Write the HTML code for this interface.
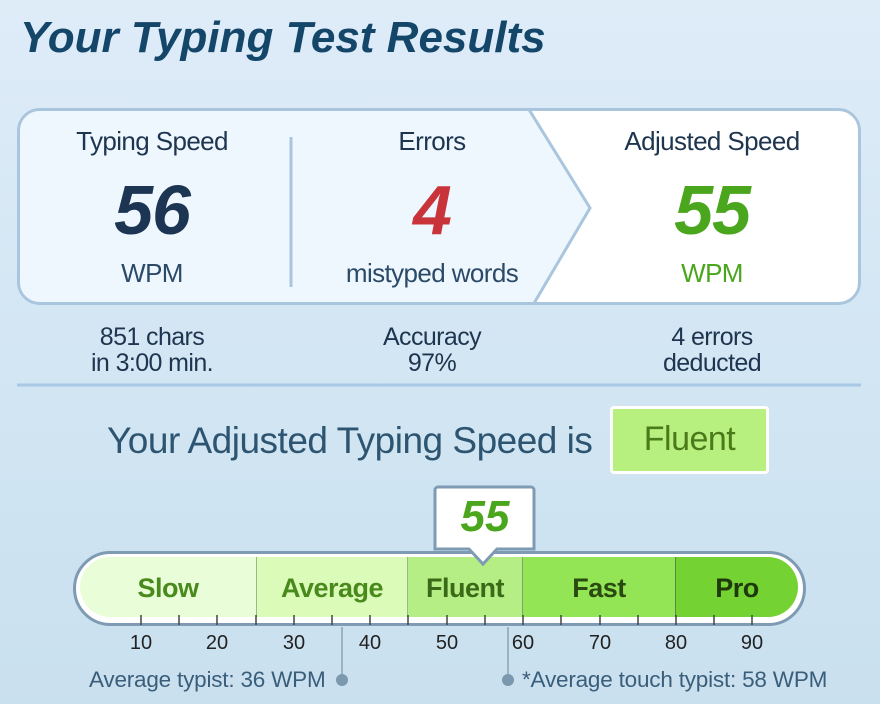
<!DOCTYPE html>
<html><head><style>
*{margin:0;padding:0;box-sizing:border-box}
body{width:880px;height:704px;overflow:hidden;background:linear-gradient(180deg,#deecf8 0%,#d3e6f3 50%,#c9e0ef 100%);font-family:"Liberation Sans",sans-serif;position:relative}
.a{position:absolute}
.c{text-align:center}
h1{position:absolute;left:20px;top:13px;font-size:44px;font-weight:bold;font-style:italic;color:#14466a;letter-spacing:0px}
.lab{font-size:26px;color:#1e3550;width:280px;letter-spacing:-0.6px}
.big{font-size:70px;font-weight:bold;font-style:italic;width:280px;letter-spacing:-1px}
.t{font-size:25px;color:#1e3550;width:280px;line-height:26px;letter-spacing:-0.6px}
.seg{position:absolute;top:0;height:100%;font-size:27px;font-weight:bold;display:flex;align-items:center;justify-content:center;padding-top:2px;letter-spacing:-0.5px}
.n{position:absolute;top:632px;font-size:20px;color:#222;width:40px;margin-left:-20px;text-align:center}
</style></head><body>
<h1>Your Typing Test Results</h1>
<svg class="a" style="left:0;top:0" width="880" height="704">
<defs><clipPath id="cp"><rect x="17" y="108" width="844" height="197" rx="22"/></clipPath></defs>
<g clip-path="url(#cp)">
<rect x="17" y="108" width="844" height="197" fill="#fff"/>
<path d="M17 108 L528 108 L590 208 L533 305 L17 305Z" fill="#eff7fe"/>
<path d="M528 108 L590 208 L533 305" fill="none" stroke="#a9c6de" stroke-width="3"/>
</g>
<rect x="18.5" y="109.5" width="841" height="194" rx="21" fill="none" stroke="#a9c6de" stroke-width="3"/>
<line x1="291" y1="137" x2="291" y2="287" stroke="#a9c6de" stroke-width="3"/>
<line x1="17" y1="385" x2="861" y2="385" stroke="#a8c8e6" stroke-width="3"/>
</svg>
<div class="a c lab" style="left:12px;top:126px">Typing Speed</div>
<div class="a c lab" style="left:292px;top:126px">Errors</div>
<div class="a c lab" style="left:572px;top:126px">Adjusted Speed</div>
<div class="a c big" style="left:12px;top:170px;color:#1c3553">56</div>
<div class="a c big" style="left:292px;top:170px;color:#c9343a">4</div>
<div class="a c big" style="left:572px;top:170px;color:#4aa61c">55</div>
<div class="a c lab" style="left:12px;top:258px;color:#2a4a68">WPM</div>
<div class="a c lab" style="left:292px;top:258px;color:#2a4a68">mistyped words</div>
<div class="a c lab" style="left:572px;top:258px;color:#4aa61c">WPM</div>
<div class="a c t" style="left:12px;top:324px">851 chars<br>in 3:00 min.</div>
<div class="a c t" style="left:292px;top:324px">Accuracy<br>97%</div>
<div class="a c t" style="left:572px;top:324px">4 errors<br>deducted</div>
<div class="a" style="left:107px;top:420px;font-size:37px;color:#2d5470;letter-spacing:-0.5px">Your Adjusted Typing Speed is</div>
<div class="a c" style="left:610px;top:406px;width:159px;height:68px;background:#b8f080;border:3px solid #fff;border-radius:4px;font-size:34px;color:#4a7a1a;line-height:60px;letter-spacing:-0.5px">Fluent</div>
<div class="a" style="left:73px;top:551px;width:733px;height:75px;border-radius:38px;background:#fff;border:3px solid #7f9bb3"></div>
<div class="a" style="left:80px;top:557px;width:718px;height:60px;border-radius:30px;overflow:hidden">
<div class="seg" style="left:0;width:176px;background:#eafdd9;color:#4a8a1c">Slow</div>
<div class="seg" style="left:176px;width:151px;background:#dafcb8;color:#4a8a1c;border-left:1px solid #9ab888">Average</div>
<div class="seg" style="left:327px;width:115px;background:#b5ee84;color:#3a6a18;border-left:1px solid #9ab888">Fluent</div>
<div class="seg" style="left:442px;width:153px;background:#94e556;color:#2a4a12;border-left:1px solid #7aa860">Fast</div>
<div class="seg" style="left:595px;width:123px;background:#74d232;color:#1e3a0c;border-left:1px solid #5a8a40">Pro</div>
</div>
<svg class="a" style="left:0;top:0" width="880" height="704">
<g stroke="#444" stroke-width="1.5">
<line x1="141" y1="615" x2="141" y2="625"/><line x1="179" y1="615" x2="179" y2="625"/><line x1="217" y1="615" x2="217" y2="625"/><line x1="256" y1="615" x2="256" y2="625"/><line x1="294" y1="615" x2="294" y2="625"/><line x1="332" y1="615" x2="332" y2="625"/><line x1="370" y1="615" x2="370" y2="625"/><line x1="408" y1="615" x2="408" y2="625"/><line x1="447" y1="615" x2="447" y2="625"/><line x1="485" y1="615" x2="485" y2="625"/><line x1="523" y1="615" x2="523" y2="625"/><line x1="561" y1="615" x2="561" y2="625"/><line x1="600" y1="615" x2="600" y2="625"/><line x1="638" y1="615" x2="638" y2="625"/><line x1="676" y1="615" x2="676" y2="625"/><line x1="714" y1="615" x2="714" y2="625"/><line x1="752" y1="615" x2="752" y2="625"/>
</g>
<line x1="342" y1="627" x2="342" y2="680" stroke="#8aa2b6" stroke-width="1.5"/>
<circle cx="342" cy="680" r="6" fill="#7c98ae"/>
<line x1="508" y1="627" x2="508" y2="680" stroke="#8aa2b6" stroke-width="1.5"/>
<circle cx="508" cy="680" r="6" fill="#7c98ae"/>
<path d="M438 487 H531 a3 3 0 0 1 3 3 V549 H497 L483 564 L469 549 H435 V490 a3 3 0 0 1 3 -3Z" fill="#fff" stroke="#7f9bb3" stroke-width="3"/>
</svg>
<div class="a c" style="left:436px;top:492px;width:98px;font-size:44px;font-weight:bold;font-style:italic;color:#4aa61c">55</div>
<div class="n" style="left:141px">10</div><div class="n" style="left:217px">20</div><div class="n" style="left:294px">30</div><div class="n" style="left:370px">40</div><div class="n" style="left:447px">50</div><div class="n" style="left:523px">60</div><div class="n" style="left:600px">70</div><div class="n" style="left:676px">80</div><div class="n" style="left:752px">90</div>
<div class="a" style="left:89px;top:667px;font-size:22.5px;color:#3a5e7a;letter-spacing:-0.2px">Average typist: 36 WPM</div>
<div class="a" style="left:522px;top:667px;font-size:22.5px;color:#3a5e7a;letter-spacing:-0.2px">*Average touch typist: 58 WPM</div>
</body></html>
